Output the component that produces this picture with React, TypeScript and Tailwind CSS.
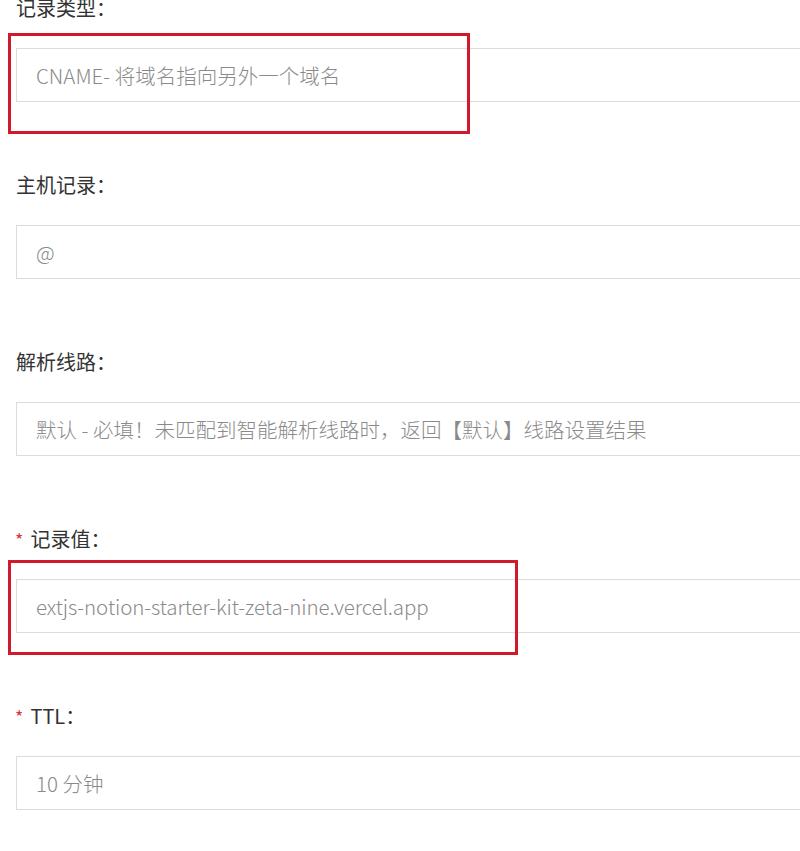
const fields = [
  { label: '记录类型', value: 'CNAME- 将域名指向另外一个域名', required: false, mark: 'type' },
  { label: '主机记录', value: '@', required: false, mark: '' },
  { label: '解析线路', value: '默认 - 必填！未匹配到智能解析线路时，返回【默认】线路设置结果', required: false, mark: '' },
  { label: '记录值', value: 'extjs-notion-starter-kit-zeta-nine.vercel.app', required: true, mark: 'value' },
  { label: 'TTL', value: '10 分钟', required: true, mark: '' },
];

function Field({ label, value, required, mark }: { label: string; value: string; required: boolean; mark: string }) {
  return (
    <div className="relative flex flex-col">
      <div className="flex items-center h-[24px] mb-[28px] text-[20px] text-[#333]">
        {required && <span className="text-[#d9363e] text-[18px] mr-[7px] ml-[-1px]">*</span>}
        <span>{label}：</span>
      </div>
      <div
        className={`relative w-[820px] h-[54px] border border-[#dcdcdc] bg-white flex items-center pl-[19px] text-[20.5px] text-[#8a8a8a] font-light ${
          mark === 'value' ? 'tracking-[-0.1px]' : ''
        }`}
      >
        {value}
        {mark === 'type' && (
          <div className="absolute left-[-9px] top-[-16px] w-[462px] h-[101px] border-[3px] border-[#d0192b]" />
        )}
        {mark === 'value' && (
          <div className="absolute left-[-9px] top-[-20px] w-[510px] h-[95px] border-[3px] border-[#d0192b]" />
        )}
      </div>
    </div>
  );
}

export default function App() {
  return (
    <div
      className="w-[800px] h-[851px] overflow-hidden bg-white pl-[16px]"
      style={{ fontFamily: '"Noto Sans CJK SC", sans-serif' }}
    >
      <div className="flex flex-col gap-[71px] mt-[-4px]">
        {fields.map((f) => (
          <Field key={f.label} {...f} />
        ))}
      </div>
    </div>
  );
}
